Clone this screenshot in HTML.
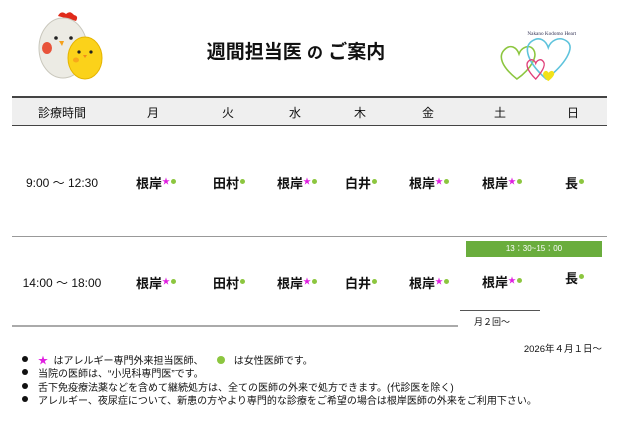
<!DOCTYPE html><html><head><meta charset="utf-8"><style>
body{margin:0;width:620px;height:439px;background:#fff;position:relative;overflow:hidden;font-family:"Liberation Sans","Noto Sans CJK JP",sans-serif;color:#111}
.a{position:absolute;white-space:nowrap}
.c{transform:translateX(-50%)}
.n{font-size:13px;font-weight:bold}
.s{color:#e020e0;font-size:8px;vertical-align:4px}
.d{display:inline-block;width:5px;height:5px;border-radius:50%;background:#8cc63f;vertical-align:4px;margin-left:1px}
.h{font-size:12px;top:104px}
.b{font-size:10px;left:38px}
.bl{position:absolute;left:22px;width:6px;height:6px;border-radius:50%;background:#111}
</style></head><body>
<svg class="a" style="left:28px;top:8px" width="80" height="75" viewBox="0 0 80 75">
<path d="M30 8 q3-6 8-2 q4-4 8 1 q5 1 2 6 z" fill="#e02a1a"/>
<ellipse cx="35" cy="40" rx="24" ry="30" fill="#ecebe4" stroke="#c9c7bc"/>
<ellipse cx="19" cy="40" rx="5" ry="6" fill="#e8533a"/>
<circle cx="28" cy="30" r="1.8" fill="#222"/><circle cx="43" cy="30" r="1.8" fill="#222"/>
<path d="M31 33 l5 0 l-2 5 z" fill="#f5a11c"/>
<ellipse cx="57" cy="50" rx="17" ry="21" fill="#fbd21a" stroke="#e5b400"/>
<circle cx="51" cy="44" r="1.6" fill="#222"/><circle cx="63" cy="44" r="1.6" fill="#222"/>
<path d="M55 47 l4 0 l-2 3z" fill="#f08a1c"/>
<ellipse cx="48" cy="52" rx="3" ry="2.5" fill="#f8a81a"/>
</svg>
<div class="a c" style="left:296px;top:37px;font-size:19px;font-weight:bold">週間担当医 <span style="font-size:16px">の</span> ご案内</div>
<svg class="a" style="left:496px;top:24px" width="92" height="62" viewBox="0 0 88 58">
<path d="M20 52 C5 40 2 30 8 24 C14 18 20 22 22 28 C24 22 32 18 36 24 C40 30 34 42 20 52Z" fill="none" stroke="#8cc63f" stroke-width="1.5"/>
<path d="M48 52 C30 36 26 22 34 16 C42 10 48 16 50 22 C52 16 60 10 68 16 C76 22 66 38 48 52Z" fill="none" stroke="#5ec3dc" stroke-width="1.5"/>
<path d="M38 52 C30 44 28 38 31 35 C34 32 37 34 38 37 C39 34 43 32 45 35 C48 38 45 44 38 52Z" fill="none" stroke="#e0407a" stroke-width="1.3"/>
<path d="M50 54 C45 50 44 47 46 45 C48 43 50 45 50 46 C51 45 53 43 55 45 C57 47 55 50 50 54Z" fill="#f2e21a"/>
<text x="30" y="10" font-size="5" fill="#335" font-family="Liberation Serif">Nakano Kodomo Heart</text>
</svg>
<div class="a" style="left:12px;top:96px;width:595px;height:27px;background:#efefef;border-top:2px solid #444;border-bottom:1.5px solid #444"></div>
<div class="a c h" style="left:62px">診療時間</div>
<div class="a c h" style="left:153px">月</div>
<div class="a c h" style="left:228px">火</div>
<div class="a c h" style="left:295px">水</div>
<div class="a c h" style="left:360px">木</div>
<div class="a c h" style="left:428px">金</div>
<div class="a c h" style="left:500px">土</div>
<div class="a c h" style="left:573px">日</div>
<div class="a c" style="left:62px;top:174px;font-size:12px">9:00 ～ 12:30</div>
<div class="a n" style="left:136px;top:173px">根岸<span class="s">★</span><span class="d"></span></div>
<div class="a n" style="left:213px;top:173px">田村<span class="d"></span></div>
<div class="a n" style="left:277px;top:173px">根岸<span class="s">★</span><span class="d"></span></div>
<div class="a n" style="left:345px;top:173px">白井<span class="d"></span></div>
<div class="a n" style="left:409px;top:173px">根岸<span class="s">★</span><span class="d"></span></div>
<div class="a n" style="left:482px;top:173px">根岸<span class="s">★</span><span class="d"></span></div>
<div class="a n" style="left:565px;top:173px">長<span class="d"></span></div>
<div class="a" style="left:12px;top:236px;width:595px;height:1px;background:#999"></div>
<div class="a" style="left:466px;top:241px;width:136px;height:16px;background:#6aad3d;color:#fff;font-size:8px;text-align:center;line-height:16px">13：30~15：00</div>
<div class="a c" style="left:62px;top:274px;font-size:12px">14:00 ～ 18:00</div>
<div class="a n" style="left:136px;top:273px">根岸<span class="s">★</span><span class="d"></span></div>
<div class="a n" style="left:213px;top:273px">田村<span class="d"></span></div>
<div class="a n" style="left:277px;top:273px">根岸<span class="s">★</span><span class="d"></span></div>
<div class="a n" style="left:345px;top:273px">白井<span class="d"></span></div>
<div class="a n" style="left:409px;top:273px">根岸<span class="s">★</span><span class="d"></span></div>
<div class="a n" style="left:482px;top:272px">根岸<span class="s">★</span><span class="d"></span></div>
<div class="a n" style="left:565px;top:268px">長<span class="d"></span></div>
<div class="a" style="left:460px;top:310px;width:80px;height:1px;background:#555"></div>
<div class="a" style="left:474px;top:315px;font-size:9px">月２回～</div>
<div class="a" style="left:12px;top:325px;width:446px;height:1.5px;background:#aaa"></div>
<div class="a" style="right:18px;top:341px;font-size:9.5px">2026年４月１日～</div>
<div class="bl" style="top:356px"></div><div class="bl" style="top:369px"></div><div class="bl" style="top:383px"></div><div class="bl" style="top:396px"></div>
<div class="a b" style="top:352px"><span style="color:#e020e0">★</span>&nbsp; はアレルギー専門外来担当医師、&nbsp;&nbsp;&nbsp;&nbsp;&nbsp;<span style="display:inline-block;width:8px;height:8px;border-radius:50%;background:#8cc63f"></span>&nbsp;&nbsp; は女性医師です。</div>
<div class="a b" style="top:365px">当院の医師は、“小児科専門医”です。</div>
<div class="a b" style="top:379px">舌下免疫療法薬などを含めて継続処方は、全ての医師の外来で処方できます。(代診医を除く)</div>
<div class="a b" style="top:392px">アレルギー、夜尿症について、新患の方やより専門的な診療をご希望の場合は根岸医師の外来をご利用下さい。</div>
</body></html>
